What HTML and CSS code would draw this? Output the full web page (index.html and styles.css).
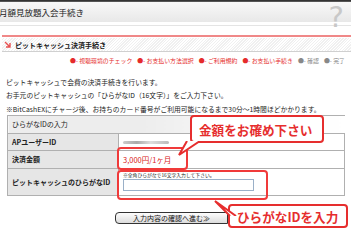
FILE: index.html
```html
<!DOCTYPE html>
<html lang="ja">
  <head>
    <meta charset="UTF-8" />
    <title>月額見放題入会手続き</title>
    <link rel="stylesheet" href="styles.css">
  </head>
  <body>
    <div class="page">
      <div class="topline"></div>
      <div class="titlebar">
        <span class="title">月額見放題入会手続き</span>
        <span class="help">?</span>
      </div>
      <div class="pinkline"></div>
      <div class="subhead">
        <svg class="arrow" width="7" height="7" viewBox="0 0 7 7">
          <path d="M1 1 L5.5 5.5 M2 6 H6 V2" stroke="#e85050" stroke-width="1.4" fill="none" />
        </svg>
        <span>ピットキャッシュ決済手続き</span>
      </div>
      <div class="steps">
        <span class="on">●- 視聴環境のチェック</span>
        <span class="on">●- お支払い方法選択</span>
        <span class="on">●- ご利用規約</span>
        <span class="on">●- お支払い手続き</span>
        <span class="off">●- 確認</span>
        <span class="off">●- 完了</span>
      </div>
      <div class="intro">
        <p>ピットキャッシュで会費の決済手続きを行います。</p>
        <p>お手元のピットキャッシュの「ひらがなID（16文字）」をご入力下さい。</p>
        <p>※BitCashEXにチャージ後、お持ちのカード番号がご利用可能になるまで30分～1時間ほどかかります。</p>
      </div>
      <table class="form">
        <tr class="head">
          <th colspan="2">ひらがなIDの入力</th>
        </tr>
        <tr class="row-ap">
          <th>APユーザーID</th>
          <td><span class="blur"></span></td>
        </tr>
        <tr class="row-price">
          <th>決済金額</th>
          <td><span class="price">3,000円/1ヶ月</span></td>
        </tr>
        <tr class="row-id">
          <th>ピットキャッシュのひらがなID</th>
          <td>
            <div class="note">※全角ひらがなで16文字入力して下さい。</div>
            <input class="idbox" type="text" />
          </td>
        </tr>
      </table>
      <div class="actions">
        <button class="next">入力内容の確認へ進む≫</button>
      </div>

      <div class="mark mark-price"></div>
      <div class="mark mark-id"></div>

      <div class="callout callout-price">
        <svg class="tail tail-price" width="24" height="16" viewBox="0 0 24 16">
          <path d="M9 0 L1 14 L22 0" fill="#fff" stroke="#e62e2e" stroke-width="2" />
        </svg>
        金額をお確め下さい
      </div>
      <div class="callout callout-id">
        <svg class="tail tail-id" width="24" height="16" viewBox="0 0 24 16">
          <path d="M22 16 L1 1 L16 16" fill="#fff" stroke="#e62e2e" stroke-width="2" />
        </svg>
        ひらがなIDを入力
      </div>
    </div>
  </body>
</html>
```

FILE: styles.css
```css
body {
  margin: 0;
  background-color: #fff;
  font-family: "Noto Sans CJK JP", "Noto Sans", sans-serif;
  color: #222;
}
.page {
  position: relative;
  width: 351px;
  height: 243px;
  overflow: hidden;
}
.topline {
  height: 2px;
  background: linear-gradient(#222, #666);
}
.titlebar {
  display: flex;
  justify-content: space-between;
  align-items: flex-start;
  height: 20px;
  background: linear-gradient(#f8f8f8, #e8e8e8);
  border-bottom: 3px solid #fff;
  box-shadow: 0 1px 0 #e4e4e4;
}
.title {
  font-size: 8.5px;
  line-height: 20px;
  margin-left: -1px;
}
.help {
  font-family: "DejaVu Sans", sans-serif;
  font-size: 29px;
  line-height: 30px;
  color: #c8c8c8;
  margin-right: 7px;
}
.pinkline {
  margin: 10px 0 0 2px;
  height: 2px;
  background-color: #f08888;
}
.subhead {
  display: flex;
  align-items: center;
  gap: 4px;
  height: 13px;
  margin: 1px 0 0 2px;
  padding-left: 2px;
  font-size: 7px;
  font-weight: bold;
  background: repeating-linear-gradient(135deg, #fff 0 1px, #f0f0f0 1px 2px);
  border-bottom: 1px solid #d0d0d0;
}
.steps {
  display: flex;
  justify-content: flex-end;
  gap: 5px;
  margin: 4px 6px 0 0;
  font-size: 5.9px;
  line-height: 9px;
}
.steps .on {
  color: #e52b2b;
}
.steps .off {
  color: #888;
}
.intro {
  margin: 11px 0 0 6px;
  font-size: 6.8px;
  line-height: 13.3px;
}
.intro p {
  margin: 0;
  white-space: nowrap;
}
.form {
  margin: -1px 0 0 7px;
  width: 338px;
  border-collapse: collapse;
  font-size: 7px;
}
.form th,
.form td {
  border: 1px solid #b0b0b0;
  padding: 0 0 0 4px;
  text-align: left;
}
.form th {
  width: 106px;
  background-color: #e6e6e6;
  font-weight: bold;
}
.form .head th {
  height: 17px;
  font-weight: normal;
  background: linear-gradient(90deg, #ededed 40%, #f8f8f8 70%, #fff);
  border-right: none;
}
.row-ap th,
.row-ap td {
  height: 16px;
}
.row-price th,
.row-price td {
  height: 17px;
}
.row-id th,
.row-id td {
  height: 26px;
}
.blur {
  display: inline-block;
  width: 46px;
  height: 3px;
  background: linear-gradient(90deg, #ccc, #aaa 30%, #ddd 60%, #bbb);
  border-radius: 2px;
  vertical-align: middle;
}
.price {
  color: #d82020;
  font-size: 7.5px;
}
.note {
  font-size: 4.8px;
  line-height: 8px;
  margin-top: -2px;
}
.idbox {
  display: block;
  width: 131px;
  height: 12px;
  padding: 0;
  border: 1px solid #9ab0c8;
  box-sizing: border-box;
}
.actions {
  display: flex;
  margin: 16px 0 0 115px;
}
.next {
  width: 113px;
  height: 12px;
  padding: 0;
  font-family: "Noto Sans CJK JP", sans-serif;
  font-size: 7px;
  line-height: 10px;
  color: #111;
  background: linear-gradient(#fdfdfd, #dcdcdc);
  border: 1px solid #333;
  border-radius: 4px 0 0 4px;
}
.mark {
  position: absolute;
  border: 2px solid #f03a3a;
  border-radius: 4px;
}
.mark-price {
  left: 117px;
  top: 147px;
  width: 67px;
  height: 19px;
}
.mark-id {
  left: 117px;
  top: 170px;
  width: 147px;
  height: 26px;
}
.callout {
  position: absolute;
  display: flex;
  align-items: center;
  padding-left: 7px;
  box-sizing: border-box;
  background-color: #fff;
  border: 2px solid #e62e2e;
  border-radius: 4px;
  color: #e62e2e;
  font-size: 12.6px;
  font-weight: bold;
  white-space: nowrap;
}
.callout-price {
  left: 190px;
  top: 115px;
  width: 134px;
  height: 28px;
}
.callout-id {
  left: 228px;
  top: 204px;
  width: 120px;
  height: 24px;
}
.tail {
  position: absolute;
}
.tail-price {
  left: -14px;
  top: 24px;
}
.tail-id {
  left: -16px;
  top: -6px;
}
```
